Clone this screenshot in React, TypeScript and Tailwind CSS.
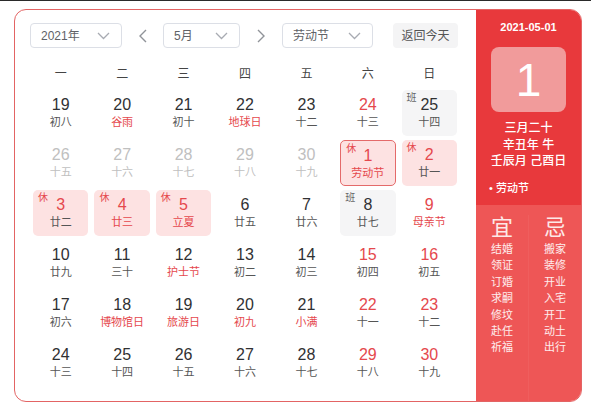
import React from "react";

type Cell = {
  d: number;
  l: string;
  dim?: boolean;
  red?: boolean;
  lred?: boolean;
  tag?: "休" | "班";
  sel?: boolean;
};

const WEEK = ["一", "二", "三", "四", "五", "六", "日"];

const ROWS: Cell[][] = [
  [
    { d: 19, l: "初八" },
    { d: 20, l: "谷雨", lred: true },
    { d: 21, l: "初十" },
    { d: 22, l: "地球日", lred: true },
    { d: 23, l: "十二" },
    { d: 24, l: "十三", red: true },
    { d: 25, l: "十四", tag: "班" },
  ],
  [
    { d: 26, l: "十五", dim: true },
    { d: 27, l: "十六", dim: true },
    { d: 28, l: "十七", dim: true },
    { d: 29, l: "十八", dim: true },
    { d: 30, l: "十九", dim: true },
    { d: 1, l: "劳动节", red: true, lred: true, tag: "休", sel: true },
    { d: 2, l: "廿一", red: true, tag: "休" },
  ],
  [
    { d: 3, l: "廿二", red: true, tag: "休" },
    { d: 4, l: "廿三", red: true, lred: true, tag: "休" },
    { d: 5, l: "立夏", red: true, lred: true, tag: "休" },
    { d: 6, l: "廿五" },
    { d: 7, l: "廿六" },
    { d: 8, l: "廿七", tag: "班" },
    { d: 9, l: "母亲节", red: true, lred: true },
  ],
  [
    { d: 10, l: "廿九" },
    { d: 11, l: "三十" },
    { d: 12, l: "护士节", lred: true },
    { d: 13, l: "初二" },
    { d: 14, l: "初三" },
    { d: 15, l: "初四", red: true },
    { d: 16, l: "初五", red: true },
  ],
  [
    { d: 17, l: "初六" },
    { d: 18, l: "博物馆日", lred: true },
    { d: 19, l: "旅游日", lred: true },
    { d: 20, l: "初九", lred: true },
    { d: 21, l: "小满", lred: true },
    { d: 22, l: "十一", red: true },
    { d: 23, l: "十二", red: true },
  ],
  [
    { d: 24, l: "十三" },
    { d: 25, l: "十四" },
    { d: 26, l: "十五" },
    { d: 27, l: "十六" },
    { d: 28, l: "十七" },
    { d: 29, l: "十八", red: true },
    { d: 30, l: "十九", red: true },
  ],
];

const YI = ["结婚", "领证", "订婚", "求嗣", "修坟", "赴任", "祈福"];
const JI = ["搬家", "装修", "开业", "入宅", "开工", "动土", "出行"];

function ChevronDown() {
  return (
    <svg width="13" height="8" viewBox="0 0 13 8" fill="none">
      <path d="M1 1l5.5 5.5L12 1" stroke="#a8abb2" strokeWidth="1.3" />
    </svg>
  );
}

function Arrow({ dir }: { dir: "l" | "r" }) {
  return (
    <svg width="8" height="14" viewBox="0 0 8 14" fill="none">
      <path
        d={dir === "l" ? "M7 1L1 7l6 6" : "M1 1l6 6-6 6"}
        stroke="#909399"
        strokeWidth="1.4"
      />
    </svg>
  );
}

function Select({ label, w }: { label: string; w: string }) {
  return (
    <div
      className={`flex h-[25px] items-center justify-between rounded-[4px] border border-[#dcdfe6] bg-white pl-[10px] pr-[11px] text-[12px] text-[#606266] ${w}`}
    >
      <span>{label}</span>
      <ChevronDown />
    </div>
  );
}

function DayCell({ c }: { c: Cell }) {
  let box = "";
  if (c.sel) box = "bg-[#fde2e2] border-[1.5px] border-[#e46a6a]";
  else if (c.tag === "休") box = "bg-[#fde2e2]";
  else if (c.tag === "班") box = "bg-[#f5f5f6]";
  const num = c.dim ? "text-[#c0c0c0]" : c.red ? "text-[#e5484d]" : "text-[#303133]";
  const lun = c.dim ? "text-[#c0c0c0]" : c.lred ? "text-[#e5484d]" : "text-[#555]";
  return (
    <div className="h-[50px] px-[3px] py-[2px]">
      <div className={`relative flex h-[46px] flex-col items-center rounded-[5px] pt-[5px] ${box}`}>
        {c.tag && (
          <span
            className={`absolute left-[5px] top-[1px] text-[10px] leading-[14px] ${
              c.tag === "休" ? "text-[#e5484d]" : "text-[#666]"
            }`}
          >
            {c.tag}
          </span>
        )}
        <span className={`text-[16px] leading-[20px] ${num}`}>{c.d}</span>
        <span className={`text-[11px] leading-[14px] ${lun}`}>{c.l}</span>
      </div>
    </div>
  );
}

export default function App() {
  return (
    <div
      className="h-[408px] w-[591px] bg-white"
      style={{ fontFamily: '"Liberation Sans", "Noto Sans CJK SC", sans-serif' }}
    >
      <div className="h-px bg-[#2a2a2a]" />
      <div className="ml-[14px] mt-[8px] flex h-[393px] w-[568px] overflow-hidden rounded-[12px] border border-[#e36464]">
        {/* left: month grid */}
        <div className="w-[461px] pl-[15px] pr-[16px] pt-[13px]">
          <div className="flex items-center">
            <Select label="2021年" w="w-[92px]" />
            <div className="flex w-[41px] justify-center">
              <Arrow dir="l" />
            </div>
            <Select label="5月" w="w-[77px]" />
            <div className="flex w-[42px] justify-center">
              <Arrow dir="r" />
            </div>
            <Select label="劳动节" w="w-[91px]" />
            <div className="ml-[20px] flex h-[25px] w-[65px] items-center justify-center rounded-[4px] bg-[#f4f4f5] text-[12px] text-[#555]">
              返回今天
            </div>
          </div>

          <div className="mt-[16px] grid h-[20px] grid-cols-7 items-center text-center text-[12px] text-[#444]">
            {WEEK.map((w) => (
              <span key={w}>{w}</span>
            ))}
          </div>

          <div className="mt-[4px] grid grid-cols-7">
            {ROWS.flat().map((c, i) => (
              <DayCell key={i} c={c} />
            ))}
          </div>
        </div>

        {/* right: day detail */}
        <div className="flex w-[105px] flex-col text-white">
          <div className="flex h-[195px] flex-col bg-[#e8393c]">
            <div className="pt-[9px] text-center text-[11px] font-bold leading-[16px]">2021-05-01</div>
            <div className="mx-auto mt-[12px] flex h-[65px] w-[75px] items-center justify-center rounded-[8px] bg-[#f19b9b] text-[46px] font-medium leading-none">
              1
            </div>
            <div className="mt-[8px] text-center text-[12px] font-medium leading-[16.5px]">
              <div>三月二十</div>
              <div>辛丑年 牛</div>
              <div>壬辰月 己酉日</div>
            </div>
            <div className="mt-[10px] pl-[13px] text-[11px] font-medium leading-[16px]">• 劳动节</div>
          </div>
          <div className="flex flex-1 bg-[#ee5656] pt-[10px]">
            <div className="flex w-[52px] flex-col items-center">
              <span className="text-[22px] leading-[26px] text-[#fde8e8]">宜</span>
              {YI.map((t) => (
                <span key={t} className="text-[11px] leading-[16.4px] text-white/90">
                  {t}
                </span>
              ))}
            </div>
            <div className="flex w-[53px] flex-col items-center border-l border-white/5">
              <span className="text-[22px] leading-[26px] text-[#fde8e8]">忌</span>
              {JI.map((t) => (
                <span key={t} className="text-[11px] leading-[16.4px] text-white/90">
                  {t}
                </span>
              ))}
            </div>
          </div>
        </div>
      </div>
    </div>
  );
}
